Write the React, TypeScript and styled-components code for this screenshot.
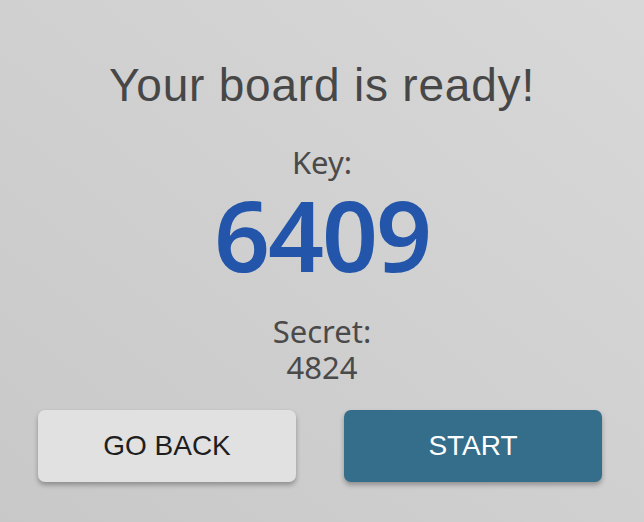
import styled, { createGlobalStyle } from 'styled-components'

const GlobalStyle = createGlobalStyle`
  html, body {
    margin: 0;
    padding: 0;
  }
  body {
    font-family: 'Liberation Sans', Arial, sans-serif;
  }
`

const Screen = styled.div`
  width: 644px;
  height: 522px;
  box-sizing: border-box;
  background: linear-gradient(to bottom left, #d8d8d8, #c8c8c8);
  display: flex;
  flex-direction: column;
  align-items: center;
  padding-top: 57px;
`

const Title = styled.h1`
  margin: 0;
  font-family: 'Liberation Sans', Arial, sans-serif;
  font-weight: 400;
  font-size: 46px;
  line-height: 56px;
  letter-spacing: 0.8px;
  color: #474747;
`

const Label = styled.div<{ $gap?: number }>`
  margin-top: ${(p) => p.$gap ?? 0}px;
  font-family: 'Noto Sans', sans-serif;
  font-size: 31px;
  line-height: 36px;
  color: #4a4a4a;
`

const KeyValue = styled.div`
  margin-top: 4px;
  font-family: 'Noto Sans', sans-serif;
  font-weight: 600;
  font-size: 98px;
  line-height: 100px;
  letter-spacing: -2px;
  color: #2356aa;
`

const Actions = styled.div`
  margin-top: 25px;
  width: 100%;
  box-sizing: border-box;
  padding: 0 42px 0 38px;
  display: grid;
  grid-template-columns: 1fr 1fr;
  gap: 48px;
`

const Button = styled.button<{ $primary?: boolean }>`
  height: 72px;
  border: none;
  border-radius: 7px;
  font-family: 'Liberation Sans', Arial, sans-serif;
  font-size: 28px;
  text-transform: uppercase;
  background: ${(p) => (p.$primary ? '#356e8a' : '#e1e1e1')};
  color: ${(p) => (p.$primary ? '#ffffff' : '#1e1e1e')};
  box-shadow: 0 3px 5px rgba(0, 0, 0, 0.3);
  cursor: pointer;
`

export default function App() {
  return (
    <>
      <GlobalStyle />
      <Screen>
        <Title>Your board is ready!</Title>
        <Label $gap={31}>Key:</Label>
        <KeyValue>6409</KeyValue>
        <Label $gap={29}>Secret:</Label>
        <Label>4824</Label>
        <Actions>
          <Button>Go back</Button>
          <Button $primary>Start</Button>
        </Actions>
      </Screen>
    </>
  )
}
